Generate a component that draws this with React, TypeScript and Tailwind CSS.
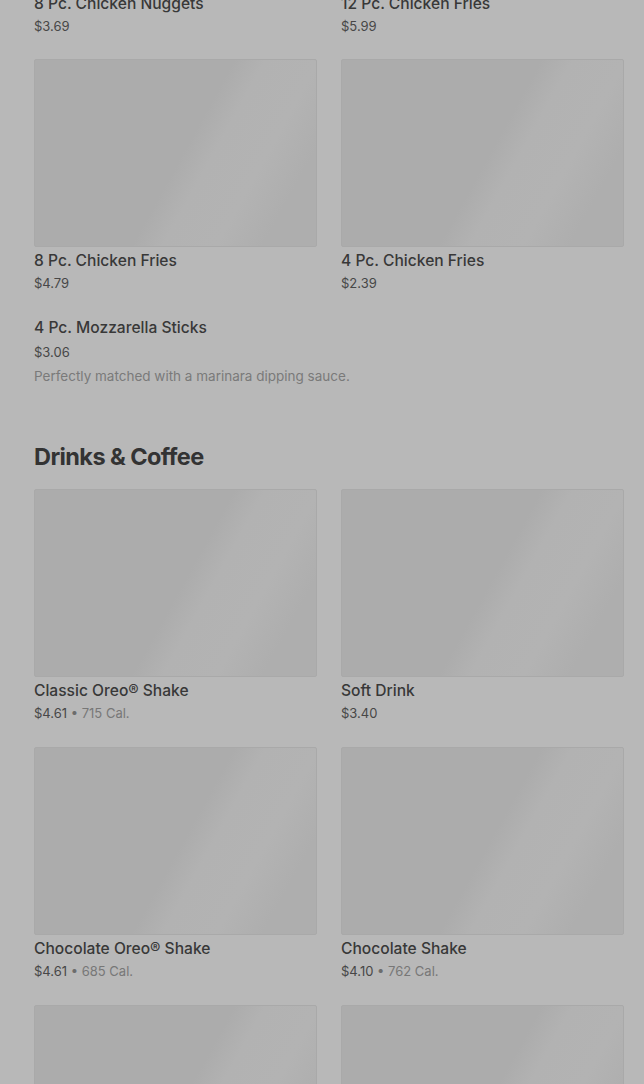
import React from "react";

type Item = {
  name: string;
  price: string;
  cal?: string;
  desc?: string;
  image?: boolean;
};

const FONT = "font-['Inter','Noto_Sans',sans-serif]";

const ItemImage = () => (
  <div className="h-[188px] w-full rounded-[2px] border border-[#a9a9a9] bg-[linear-gradient(119deg,#acacac_0%,#acacac_52%,#b2b2b2_60%,#b3b3b3_74%,#aeaeae_86%,#aeaeae_100%)]" />
);

const MenuCard = ({ item }: { item: Item }) => (
  <div className="flex flex-col">
    {item.image && <ItemImage />}
    <div className="mt-[2px] text-[15.6px] font-medium leading-[24px] text-[#383838]">
      {item.name}
    </div>
    <div className="text-[13px] leading-[20px] text-[#474747]">
      {item.price}
      {item.cal && (
        <>
          <span className="text-[#6c6c6c]"> • </span>
          <span className="text-[#777777]">{item.cal}</span>
        </>
      )}
    </div>
  </div>
);

const sides: Item[] = [
  { name: "8 Pc. Chicken Fries", price: "$4.79", image: true },
  { name: "4 Pc. Chicken Fries", price: "$2.39", image: true },
];

const drinks: Item[] = [
  { name: "Classic Oreo® Shake", price: "$4.61", cal: "715 Cal.", image: true },
  { name: "Soft Drink", price: "$3.40", image: true },
  { name: "Chocolate Oreo® Shake", price: "$4.61", cal: "685 Cal.", image: true },
  { name: "Chocolate Shake", price: "$4.10", cal: "762 Cal.", image: true },
];

export default function App() {
  return (
    <div className={`h-[1084px] w-[644px] overflow-hidden bg-[#b8b8b8] ${FONT}`}>
      <div className="-mt-[10px] pl-[34px] pr-[20px]">
        {/* tail of previous row, scrolled past the top */}
        <div className="grid grid-cols-2 gap-x-[24px]">
          <MenuCard item={{ name: "8 Pc. Chicken Nuggets", price: "$3.69" }} />
          <MenuCard item={{ name: "12 Pc. Chicken Fries", price: "$5.99" }} />
        </div>

        <div className="mt-[23px] grid grid-cols-2 gap-x-[24px]">
          {sides.map((it) => (
            <MenuCard key={it.name} item={it} />
          ))}
        </div>

        {/* item without picture */}
        <div className="mt-[23px] flex flex-col">
          <div className="text-[15.6px] font-medium leading-[24px] text-[#383838]">
            4 Pc. Mozzarella Sticks
          </div>
          <div className="text-[13px] leading-[24px] text-[#474747]">$3.06</div>
          <div className="text-[13.5px] leading-[24px] text-[#7a7a7a]">
            Perfectly matched with a marinara dipping sauce.
          </div>
        </div>

        {/* Drinks & Coffee */}
        <h2 className="mt-[53px] text-[23.5px] font-bold leading-[32px] tracking-[-0.025em] text-[#333333]">
          Drinks &amp; Coffee
        </h2>

        <div className="mt-[16px] grid grid-cols-2 gap-x-[24px] gap-y-[24px]">
          {drinks.map((it) => (
            <MenuCard key={it.name} item={it} />
          ))}
          <ItemImage />
          <ItemImage />
        </div>
      </div>
    </div>
  );
}
